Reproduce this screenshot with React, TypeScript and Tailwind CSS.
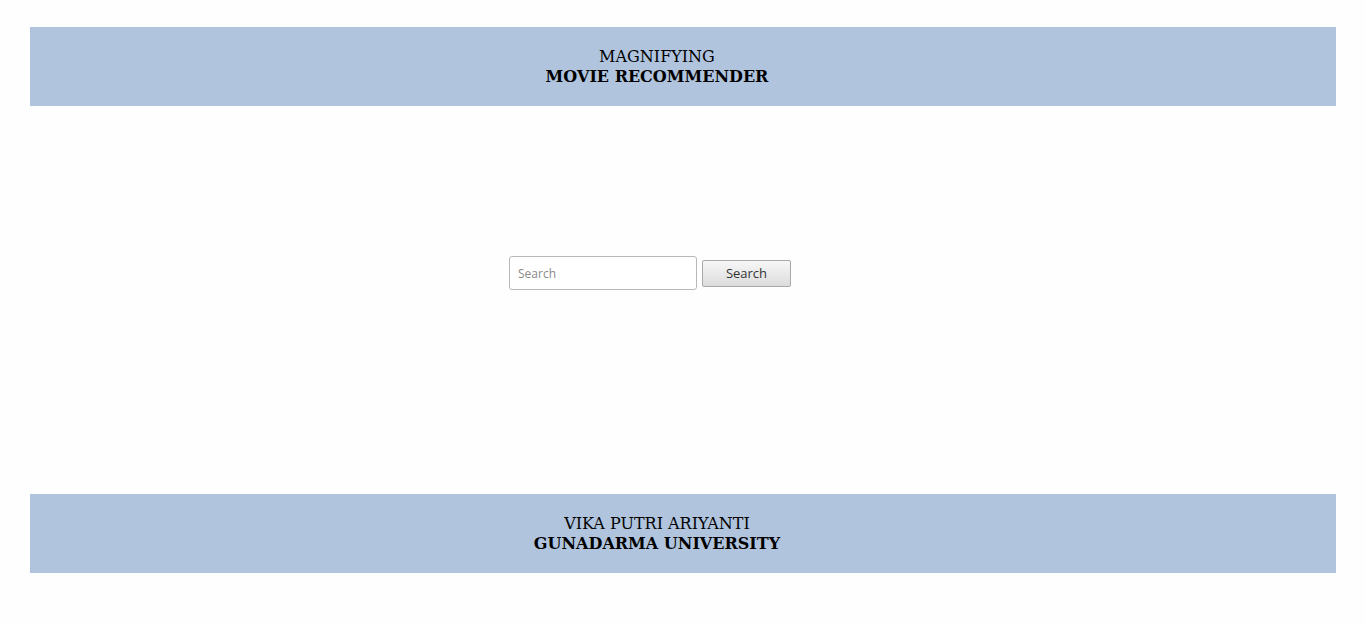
export default function App() {
  const serif = { fontFamily: '"DejaVu Serif", serif' };
  return (
    <div className="min-h-[626px] w-full bg-[#fefefe] px-[30px] pt-[27px]" >
      <div
        className="flex h-[79px] flex-col items-center justify-center bg-[#b0c4de] pr-[52px] text-[16px] leading-[20px] text-black"
        style={serif}
      >
        <div>MAGNIFYING</div>
        <div className="font-bold">MOVIE RECOMMENDER</div>
      </div>
      <div className="h-[388px] pt-[150px]">
        <div
          className="flex items-center justify-center pr-[66px]"
          style={{ fontFamily: '"Open Sans", sans-serif' }}
        >
          <input
            type="text"
            placeholder="Search"
            className="h-[34px] w-[188px] rounded-[3px] border border-[#b8b8b8] bg-white px-2 text-[12px] text-[#555] outline-none placeholder:text-[#8a8a8a]"
          />
          <button className="ml-[5px] h-[27px] w-[89px] rounded-[2px] border border-[#a9a9a9] bg-gradient-to-b from-[#f7f7f7] to-[#dcdcdc] text-[13px] leading-[18px] text-[#333]">
            Search
          </button>
        </div>
      </div>
      <div
        className="flex h-[79px] flex-col items-center justify-center bg-[#b0c4de] pr-[52px] text-[16px] leading-[20px] text-black"
        style={serif}
      >
        <div>VIKA PUTRI ARIYANTI</div>
        <div className="font-bold">GUNADARMA UNIVERSITY</div>
      </div>
    </div>
  );
}
